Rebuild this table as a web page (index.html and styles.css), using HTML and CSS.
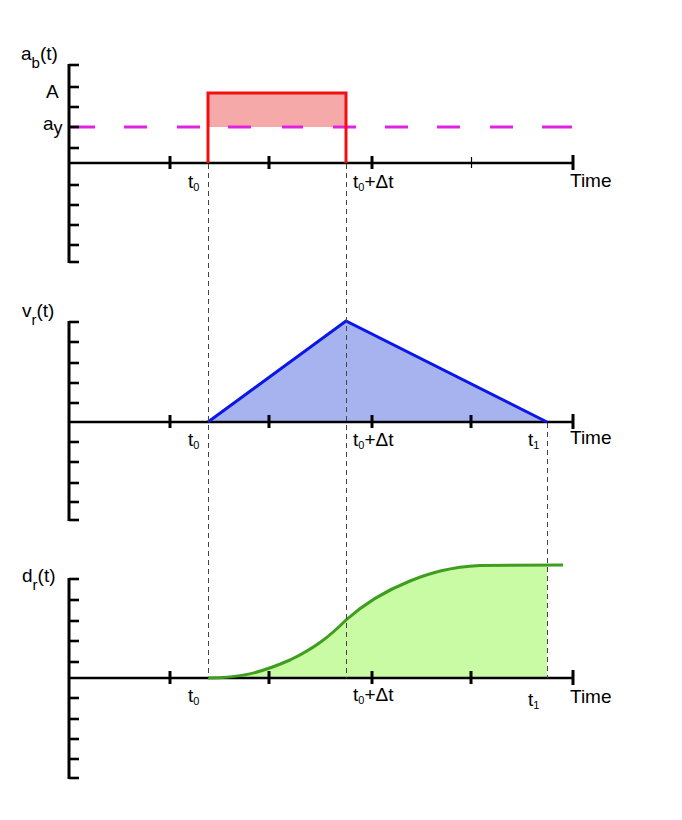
FILE: index.html
```html
<!DOCTYPE html>
<html>
<head>
<meta charset="utf-8">
<link rel="stylesheet" href="styles.css">
</head>
<body>
<div class="figure">
<svg class="plot" width="682" height="820" viewBox="0 0 682 820" xmlns="http://www.w3.org/2000/svg">
  <!-- ===== Top chart: a_b(t) ===== -->
  <rect class="fill-red" x="208" y="93" width="138" height="34"/>
  <g class="dash-mag">
    <line x1="69" y1="127" x2="95" y2="127"/>
    <line x1="124" y1="127" x2="147" y2="127"/>
    <line x1="177" y1="127" x2="200" y2="127"/>
    <line x1="228" y1="127" x2="251" y2="127"/>
    <line x1="282" y1="127" x2="303" y2="127"/>
    <line x1="333" y1="127" x2="356" y2="127"/>
    <line x1="385" y1="127" x2="408" y2="127"/>
    <line x1="437" y1="127" x2="460" y2="127"/>
    <line x1="490" y1="127" x2="513" y2="127"/>
    <line x1="542" y1="127" x2="572" y2="127"/>
  </g>
  <g class="axis">
    <line class="yaxis" x1="69" y1="64" x2="69" y2="263"/>
    <line x1="69" y1="163" x2="573" y2="163"/>
    <g class="ytick">
      <line x1="69" y1="65" x2="79" y2="65"/>
      <line x1="69" y1="87" x2="79" y2="87"/>
      <line x1="69" y1="107" x2="79" y2="107"/>
      <line x1="69" y1="127" x2="79" y2="127"/>
      <line x1="69" y1="148" x2="79" y2="148"/>
      <line x1="69" y1="185" x2="79" y2="185"/>
      <line x1="69" y1="205" x2="79" y2="205"/>
      <line x1="69" y1="225" x2="79" y2="225"/>
      <line x1="69" y1="245" x2="79" y2="245"/>
      <line x1="69" y1="262" x2="79" y2="262"/>
    </g>
    <g class="xtick">
      <line x1="170" y1="156" x2="170" y2="169"/>
      <line x1="269" y1="156" x2="269" y2="169"/>
      <line x1="372" y1="156" x2="372" y2="169"/>
      <line class="thin" x1="471.5" y1="157" x2="471.5" y2="168"/>
      <line x1="573" y1="155" x2="573" y2="170"/>
    </g>
  </g>
  <polyline class="line-red" points="208,163 208,93 346,93 346,163"/>

  <!-- ===== Middle chart: v_r(t) ===== -->
  <polygon class="fill-blue" points="208,422 346,321 547,422"/>
  <g class="axis">
    <line class="yaxis" x1="69" y1="321" x2="69" y2="521"/>
    <line x1="69" y1="422" x2="573" y2="422"/>
    <g class="ytick">
      <line x1="69" y1="322" x2="79" y2="322"/>
      <line x1="69" y1="342" x2="79" y2="342"/>
      <line x1="69" y1="363" x2="79" y2="363"/>
      <line x1="69" y1="383" x2="79" y2="383"/>
      <line x1="69" y1="403" x2="79" y2="403"/>
      <line x1="69" y1="442" x2="79" y2="442"/>
      <line x1="69" y1="462" x2="79" y2="462"/>
      <line x1="69" y1="483" x2="79" y2="483"/>
      <line x1="69" y1="502" x2="79" y2="502"/>
      <line x1="69" y1="520" x2="79" y2="520"/>
    </g>
    <g class="xtick">
      <line x1="170" y1="415" x2="170" y2="428"/>
      <line x1="269" y1="415" x2="269" y2="428"/>
      <line x1="372" y1="415" x2="372" y2="428"/>
      <line x1="471" y1="415" x2="471" y2="428"/>
      <line x1="573" y1="414" x2="573" y2="429"/>
    </g>
  </g>
  <polyline class="line-blue" points="208,422 346,321 547,422"/>

  <!-- ===== Bottom chart: d_r(t) ===== -->
  <path class="fill-green" d="M208,678 C240,678 260,673 290,660 C315,648 330,636 346,620 C365,603 385,591 410,581 C430,573 450,567 480,565.5 L547,565 L547,678 Z"/>
  <g class="axis">
    <line class="yaxis" x1="69" y1="578" x2="69" y2="779"/>
    <line x1="69" y1="678" x2="573" y2="678"/>
    <g class="ytick">
      <line x1="69" y1="579" x2="79" y2="579"/>
      <line x1="69" y1="600" x2="79" y2="600"/>
      <line x1="69" y1="621" x2="79" y2="621"/>
      <line x1="69" y1="641" x2="79" y2="641"/>
      <line x1="69" y1="662" x2="79" y2="662"/>
      <line x1="69" y1="698" x2="79" y2="698"/>
      <line x1="69" y1="719" x2="79" y2="719"/>
      <line x1="69" y1="739" x2="79" y2="739"/>
      <line x1="69" y1="759" x2="79" y2="759"/>
      <line x1="69" y1="778" x2="79" y2="778"/>
    </g>
    <g class="xtick">
      <line x1="170" y1="671" x2="170" y2="684"/>
      <line x1="269" y1="671" x2="269" y2="684"/>
      <line x1="372" y1="671" x2="372" y2="684"/>
      <line x1="471" y1="671" x2="471" y2="684"/>
      <line x1="573" y1="670" x2="573" y2="685"/>
    </g>
  </g>
  <path class="line-green" d="M208,678 C240,678 260,673 290,660 C315,648 330,636 346,620 C365,603 385,591 410,581 C430,573 450,567 480,565.5 L563,565"/>

  <!-- ===== Guide lines ===== -->
  <g class="guide">
    <line x1="208.5" y1="164" x2="208.5" y2="678"/>
    <line x1="346.5" y1="164" x2="346.5" y2="678"/>
    <line x1="547.5" y1="423" x2="547.5" y2="678"/>
  </g>

  <!-- ===== Labels ===== -->
  <g class="label">
    <text x="21" y="60">a<tspan class="sub-big" dy="8">b</tspan><tspan dy="-8">(t)</tspan></text>
    <text x="46" y="98">A</text>
    <text x="43" y="130">a<tspan class="sub-y" dy="4">y</tspan></text>
    <text x="188" y="188">t<tspan class="sub" dy="3">0</tspan></text>
    <text x="353" y="188">t<tspan class="sub" dy="3">0</tspan><tspan dy="-3">+Δt</tspan></text>
    <text x="570" y="187">Time</text>

    <text x="22" y="317">v<tspan class="sub-big" dy="8">r</tspan><tspan dy="-8">(t)</tspan></text>
    <text x="188" y="446">t<tspan class="sub" dy="3">0</tspan></text>
    <text x="353" y="446">t<tspan class="sub" dy="3">0</tspan><tspan dy="-3">+Δt</tspan></text>
    <text x="528" y="446">t<tspan class="sub" dy="3">1</tspan></text>
    <text x="570" y="444">Time</text>

    <text x="22" y="582">d<tspan class="sub-big" dy="8">r</tspan><tspan dy="-8">(t)</tspan></text>
    <text x="188" y="702">t<tspan class="sub" dy="3">0</tspan></text>
    <text x="353" y="701">t<tspan class="sub" dy="3">0</tspan><tspan dy="-3">+Δt</tspan></text>
    <text x="528" y="706">t<tspan class="sub" dy="3">1</tspan></text>
    <text x="570" y="703">Time</text>
  </g>
</svg>
</div>
</body>
</html>
```
FILE: styles.css
```css
html, body {
  margin: 0;
  padding: 0;
  background: #ffffff;
}

.figure {
  width: 682px;
  height: 820px;
  display: flex;
}

.plot {
  display: block;
}

.axis line {
  stroke: #000000;
  stroke-width: 2.6;
}

.axis .yaxis {
  stroke-width: 3;
}

.ytick line {
  stroke-width: 2.6;
}

.xtick line {
  stroke-width: 3;
}

.xtick line.thin {
  stroke-width: 1.2;
}

.fill-red {
  fill: #f5a9a9;
  stroke: none;
}

.line-red {
  fill: none;
  stroke: #f01010;
  stroke-width: 3;
}

.dash-mag line {
  stroke: #e023e0;
  stroke-width: 3;
}

.fill-blue {
  fill: #a6b3ee;
  stroke: none;
}

.line-blue {
  fill: none;
  stroke: #0b16e8;
  stroke-width: 3;
  stroke-linejoin: miter;
}

.fill-green {
  fill: #c9fba4;
  stroke: none;
}

.line-green {
  fill: none;
  stroke: #3f9d1f;
  stroke-width: 3;
  stroke-linejoin: round;
}

.guide line {
  stroke: #444444;
  stroke-width: 1;
  stroke-dasharray: 5 4;
}

.label text {
  font-family: "Liberation Sans", Arial, sans-serif;
  font-size: 19px;
  fill: #000000;
}

.label .sub {
  font-size: 11px;
}

.label .sub-big {
  font-size: 15px;
}

.label .sub-y {
  font-size: 18px;
}
```
